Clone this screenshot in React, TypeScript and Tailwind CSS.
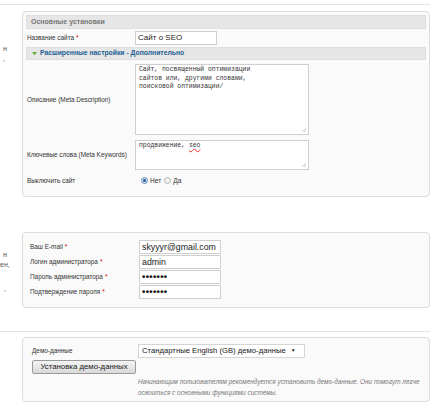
import React from 'react';

const label = "text-[6.4px] whitespace-nowrap text-[#333] font-['Liberation_Sans',Arial,sans-serif]";
const input =
  "h-[14px] border border-[#cfcfcf] bg-white px-[2px] flex items-center whitespace-nowrap overflow-hidden text-[#222] leading-none font-['Liberation_Sans',Arial,sans-serif]";
const mono = "font-['Liberation_Mono','Courier_New',monospace] text-[6.4px] leading-[8.5px] text-[#333]";

function Req() {
  return <span className="text-[#cc0000] ml-[2px]">*</span>;
}

function Grip() {
  return (
    <svg className="absolute right-[1px] bottom-[1px]" width="6" height="6" viewBox="0 0 6 6">
      <path d="M5 1 L1 5 M5 3 L3 5" stroke="#bbb" strokeWidth="0.8" />
    </svg>
  );
}

function Radio({ checked }: { checked?: boolean }) {
  return (
    <span
      className={`inline-block w-[7px] h-[7px] rounded-full border ${
        checked ? 'border-[#6a8fb8] bg-[radial-gradient(circle,#2f5f9a_35%,#cfe0f2_45%)]' : 'border-[#b5b5b5] bg-[#f3f3f3]'
      }`}
    />
  );
}

export default function App() {
  return (
    <div className="w-[434px] h-[413px] bg-white overflow-hidden font-['Liberation_Sans',Arial,sans-serif]">
      <div className="h-[4px]" />
      <div className="w-[430px] border-t border-[#e2e2e2]" />

      {/* Basic settings */}
      <div className="flex mt-[6px]">
        <div className="w-[22px] pt-[33px] text-[7px] text-[#555] leading-[10px] pl-[3px]">
          <div>н</div>
          <div>,</div>
        </div>
        <div className="w-[408px] h-[186px] rounded-[4px] border border-[#dcdcdc] bg-[#fafafa] px-[3px] pt-[3px]">
          <div className="h-[14px] bg-[#e6e6e6] border border-[#dedede] flex items-center pl-[4px] text-[7px] font-bold text-[#777]">
            Основные установки
          </div>
          <div className="flex items-center h-[18px]">
            <div className={`w-[109px] pl-[1px] ${label}`}>
              Название сайта<Req />
            </div>
            <div className={`${input} w-[82px] text-[8px]`}>Сайт о SEO</div>
          </div>
          <div className="h-[13px] bg-[#e6e6e6] border border-[#dedede] flex items-center pl-[5px] text-[6.8px] font-bold text-[#1e5f94] whitespace-nowrap">
            <svg width="5" height="4" viewBox="0 0 6 5" className="mr-[3px]">
              <path d="M0 0 L6 0 L3 4 Z" fill="#6cae3a" />
            </svg>
            Расширенные настройки - Дополнительно
          </div>
          <div className="flex items-center mt-[4px]">
            <div className={`w-[109px] pl-[1px] ${label}`}>Описание (Meta Description)</div>
            <div className={`relative w-[174px] h-[71px] border border-[#cfcfcf] bg-white px-[3px] pt-[1px] whitespace-nowrap ${mono}`}>
              Сайт, посвященный оптимизации
              <br />
              сайтов или, другими словами,
              <br />
              поисковой оптимизации/
              <Grip />
            </div>
          </div>
          <div className="flex items-center mt-[5px]">
            <div className={`w-[109px] pl-[1px] ${label}`}>Ключевые слова (Meta Keywords)</div>
            <div className={`relative w-[174px] h-[30px] border border-[#cfcfcf] bg-white px-[3px] pt-[1px] whitespace-nowrap ${mono}`}>
              продвижение,{' '}
              <span className="underline decoration-wavy decoration-[#e03030] decoration-[0.6px]">seo</span>
              <Grip />
            </div>
          </div>
          <div className="flex items-center mt-[6px]">
            <div className={`w-[109px] pl-[1px] ${label}`}>Выключить сайт</div>
            <div className="flex items-center pl-[6px] text-[6.6px] text-[#333]">
              <Radio checked />
              <span className="ml-[2px] mr-[3px]">Нет</span>
              <Radio />
              <span className="ml-[2px]">Да</span>
            </div>
          </div>
        </div>
      </div>

      {/* Admin */}
      <div className="flex mt-[35px]">
        <div className="w-[22px] pt-[18px] text-[7px] text-[#555] leading-[10px]">
          <div className="pl-[3px]">н</div>
          <div>ен,</div>
          <div className="h-[14px]" />
          <div className="pl-[4px] text-[#4a6c96]">,</div>
        </div>
        <div className="w-[408px] h-[76px] rounded-[4px] border border-[#dcdcdc] bg-[#fafafa] pl-[7px] pt-[7px] flex flex-col gap-[1px]">
          {[
            ['Ваш E-mail', 'skyyyr@gmail.com', false],
            ['Логин администратора', 'admin', false],
            ['Пароль администратора', '•••••••', true],
            ['Подтверждение пароля', '•••••••', true],
          ].map(([l, v, pw]) => (
            <div key={l as string} className="flex items-center">
              <div className={`w-[109px] ${label}`}>
                {l}
                <Req />
              </div>
              <div className={`${input} w-[82px] ${pw ? 'text-[9.5px] font-bold tracking-[0.3px] text-black' : 'text-[8.8px]'}`}>{v}</div>
            </div>
          ))}
        </div>
      </div>

      <div className="w-[430px] border-t border-[#e2e2e2] mt-[23px]" />

      {/* Demo data */}
      <div className="flex mt-[5px]">
        <div className="w-[22px]" />
        <div className="w-[408px] h-[65px] rounded-[4px] border border-[#dcdcdc] bg-[#fafafa] pl-[9px] pt-[6px]">
          <div className="flex items-center">
            <div className={`w-[106px] ${label}`}>Демо-данные</div>
            <div className="h-[14px] w-[167px] border border-[#d5d5d5] bg-white flex items-center pl-[3px] text-[7.7px] text-[#222] whitespace-nowrap">
              Стандартные English (GB) демо-данные
              <span className="ml-[5px] text-[5px] text-[#333]">▼</span>
            </div>
          </div>
          <div className="mt-[2px] w-[104px] h-[14px] rounded-[2px] border border-[#9a9a9a] bg-[linear-gradient(#f4f4f4,#d9d9d9)] flex items-center justify-center text-[7.8px] text-[#222] whitespace-nowrap">
            Установка демо-данных
          </div>
          <div className="ml-[106px] mt-[2px] text-[6.4px] leading-[11px] italic text-[#777] whitespace-nowrap">
            Начинающим пользователям рекомендуется установить демо-данные. Они помогут легче
            <br />
            освоиться с основными функциями системы.
          </div>
        </div>
      </div>
    </div>
  );
}
